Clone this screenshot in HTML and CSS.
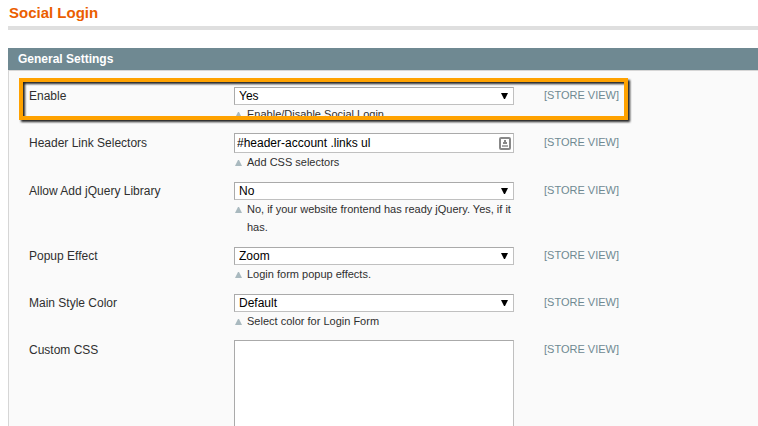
FILE: index.html
```html
<!DOCTYPE html>
<html lang="en">
<head>
<meta charset="utf-8">
<title>Social Login</title>
<link rel="stylesheet" href="styles.css">
</head>
<body>
<main class="page">
  <h1 class="page-title">Social Login</h1>
  <form class="panel">
    <h2 class="panel-title">General Settings</h2>
    <div class="fields">
      <div class="row">
        <label class="label" for="enable">Enable</label>
        <div class="control">
          <div class="box">
            <select class="select" id="enable"><option>Yes</option><option>No</option></select>
            <svg class="arrow" viewBox="0 0 7 6"><path d="M0 0h7L4 6H3z"/></svg>
          </div>
          <p class="hint"><svg class="mark" viewBox="0 0 7 6"><path d="M3 0h1l3 6H0z"/></svg>Enable/Disable Social Login</p>
        </div>
        <span class="scope">[STORE VIEW]</span>
        <div class="highlight"></div>
      </div>
      <div class="row">
        <label class="label" for="selectors">Header Link Selectors</label>
        <div class="control">
          <div class="box">
            <input class="input" id="selectors" type="text" value="#header-account .links ul">
            <svg class="autofill" viewBox="0 0 12 13"><rect x="1" y="1" width="10" height="11" rx="1" fill="#fff" stroke="#888" stroke-width="2"/><path d="M5 3h2v3H5zM4 5h4v2H4z" fill="#888"/><path d="M3 8h6v2H3z" fill="#aaa"/></svg>
          </div>
          <p class="hint"><svg class="mark" viewBox="0 0 7 6"><path d="M3 0h1l3 6H0z"/></svg>Add CSS selectors</p>
        </div>
        <span class="scope">[STORE VIEW]</span>
      </div>
      <div class="row">
        <label class="label" for="jquery">Allow Add jQuery Library</label>
        <div class="control">
          <div class="box">
            <select class="select" id="jquery"><option>No</option><option>Yes</option></select>
            <svg class="arrow" viewBox="0 0 7 6"><path d="M0 0h7L4 6H3z"/></svg>
          </div>
          <p class="hint"><svg class="mark" viewBox="0 0 7 6"><path d="M3 0h1l3 6H0z"/></svg>No, if your website frontend has ready jQuery. Yes, if it has.</p>
        </div>
        <span class="scope">[STORE VIEW]</span>
      </div>
      <div class="row">
        <label class="label" for="effect">Popup Effect</label>
        <div class="control">
          <div class="box">
            <select class="select" id="effect"><option>Zoom</option></select>
            <svg class="arrow" viewBox="0 0 7 6"><path d="M0 0h7L4 6H3z"/></svg>
          </div>
          <p class="hint"><svg class="mark" viewBox="0 0 7 6"><path d="M3 0h1l3 6H0z"/></svg>Login form popup effects.</p>
        </div>
        <span class="scope">[STORE VIEW]</span>
      </div>
      <div class="row">
        <label class="label" for="color">Main Style Color</label>
        <div class="control">
          <div class="box">
            <select class="select" id="color"><option>Default</option></select>
            <svg class="arrow" viewBox="0 0 7 6"><path d="M0 0h7L4 6H3z"/></svg>
          </div>
          <p class="hint"><svg class="mark" viewBox="0 0 7 6"><path d="M3 0h1l3 6H0z"/></svg>Select color for Login Form</p>
        </div>
        <span class="scope">[STORE VIEW]</span>
      </div>
      <div class="row">
        <label class="label" for="css">Custom CSS</label>
        <div class="control">
          <textarea class="textarea" id="css"></textarea>
        </div>
        <span class="scope">[STORE VIEW]</span>
      </div>
    </div>
  </form>
</main>
</body>
</html>
```

FILE: styles.css
```css
* { box-sizing: border-box; }

body {
  margin: 0;
  height: 100vh;
  overflow: hidden;
  background: #fff;
  color: #2f2f2f;
  font: 12px/18px Arial, "Liberation Sans", sans-serif;
}

.page { padding-left: 8px; }

.page-title {
  margin: 0 0 18px;
  padding: 4px 0 4px 1px;
  border-bottom: 4px solid #dfdfdf;
  color: #eb5e00;
  font-size: 15px;
  line-height: 18px;
}

.panel-title {
  margin: 0;
  padding: 2px 10px;
  background: #6f8992;
  color: #fff;
  font-size: 12px;
  line-height: 18px;
}

.fields {
  padding: 15px 20px;
  border: solid #d6d6d6;
  border-width: 1px 0 1px 1px;
  background: #fafafa;
}

.row {
  position: relative;
  display: grid;
  grid-template-columns: 205px 280px 1fr;
  padding-bottom: 10px;
}

.label { padding-top: 1px; }

.box {
  position: relative;
  display: flex;
  align-items: center;
}

.select,
.input,
.textarea {
  display: block;
  width: 100%;
  margin: 0;
  border: 1px solid #aaa;
  border-right-color: #c0c0c0;
  border-bottom-color: #c0c0c0;
  border-radius: 0;
  background: #fff;
  color: #000;
  font: inherit;
}

.select {
  height: 18px;
  margin-top: 1px;
  padding: 0 20px 0 4px;
  line-height: 16px;
  appearance: none;
}

.input {
  height: 20px;
  padding: 0 20px 0 2px;
}

.textarea {
  height: 240px;
  padding: 2px;
  resize: none;
}

.arrow {
  position: absolute;
  top: 7px;
  right: 6px;
  width: 7px;
  height: 6px;
  pointer-events: none;
}

.autofill {
  position: absolute;
  top: 4px;
  right: 3px;
  width: 12px;
  height: 13px;
}

.hint {
  position: relative;
  margin: 0;
  padding-left: 13px;
  font-size: 11px;
}

.mark {
  position: absolute;
  top: 7px;
  left: 1px;
  width: 7px;
  height: 6px;
  fill: #a9b9bf;
}

.scope {
  padding-left: 30px;
  color: #6f8992;
  font-size: 11px;
}

.highlight {
  position: absolute;
  top: -8px;
  left: -10px;
  width: 609px;
  height: 42px;
  border: 4px solid #ffa200;
  filter: drop-shadow(2px 2px 1px #222);
  pointer-events: none;
}
```
